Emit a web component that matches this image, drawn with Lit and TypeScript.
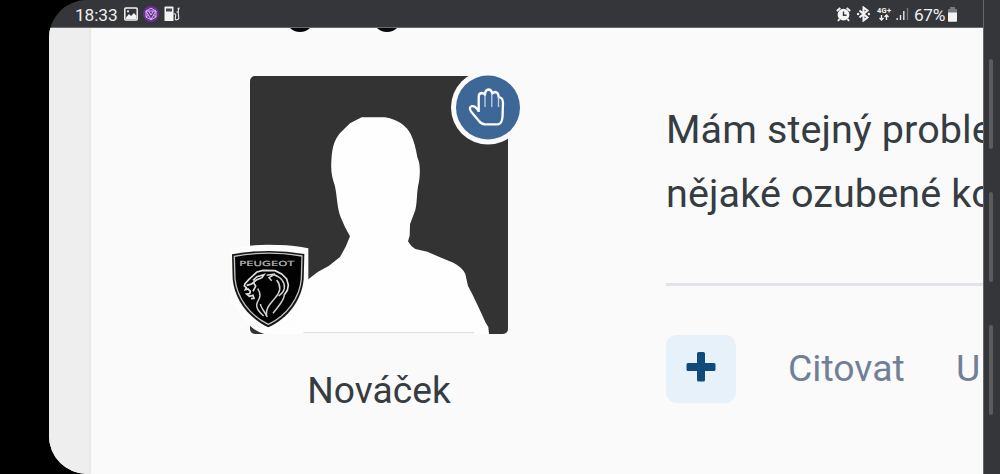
import { LitElement, html, css, svg } from "lit";
import { customElement } from "lit/decorators.js";

const lionStrokes = [
  "M84 122 L96 111 L114 106 L150 107 L170 117 L185 132 L190 150 L187 166 L178 179",
  "M84 122 L72 133 L60 146 L58 153 L64 158 L61 164 L69 162 L76 169 L74 176 L65 177 L73 184 L84 181 L87 190 L78 191",
  "M65 151 L80 147 L94 135 L111 128 L117 119 L96 125 L84 136",
  "M86 144 L92 153 L84 169",
];
const maneStrokes = [
  "M98 161 C111 179 103 190 98 200 C89 216 101 229 116 243",
  "M125 121 L150 117 L132 128 L140 137",
  "M147 119 C169 126 181 144 178 160 C176 172 169 177 161 183",
  "M155 135 C169 152 166 171 151 188 C137 207 123 213 124 242",
  "M178 178 C179 198 157 216 144 235",
  "M106 207 C108 220 119 229 127 246",
];

@customElement("status-bar")
class StatusBar extends LitElement {
  static styles = css`
    :host {
      display: flex;
      box-sizing: border-box;
      height: 28px;
      padding: 1px 25px 0 26px;
      align-items: center;
      justify-content: space-between;
      background: #35363a;
      border-bottom: 1px solid #68696c;
      color: #eeeef0;
      font: 17.3px/26px Roboto, sans-serif;
    }
    .group { display: flex; align-items: center; height: 27px; }
    .time { width: 49px; letter-spacing: -0.1px; padding-top: 1px; }
    .percent { width: 33px; letter-spacing: -0.35px; margin-left: 5px; padding-top: 1px; }
    svg { display: block; flex: none; }
    .spaced { margin-left: 5px; }
    .tight { margin-left: 3px; }
    .network { font: 700 7.5px Roboto, sans-serif; }
  `;
  render() {
    return html`
      <div class="group">
        <span class="time">18:33</span>
        <svg width="14" height="14" viewBox="0 0 14 14"><rect x=".8" y="1" width="12.4" height="12" rx="1" fill="none" stroke="#f3f3f4" stroke-width="1.5"/><path d="M2 10.5 5 7l2 2 3-3 2.5 3v3H2z" fill="#f3f3f4"/><circle cx="4" cy="4.3" r="1.1" fill="#f3f3f4"/></svg>
        <svg class="spaced" width="16" height="16" viewBox="0 0 16 16"><circle cx="8" cy="8" r="8" fill="#6b2e9a"/><path d="M8 2.2 13 5v6l-5 2.8L3 11V5zM3 5l10 0L8 13.5zM5.5 5 8 9l2.5-4M3 11l2.5-2M13 11l-2.5-2" fill="none" stroke="#d6b9e8" stroke-width="1"/></svg>
        <svg class="spaced" width="17" height="16" viewBox="0 0 17 16"><path d="M.5 1.5q0-1 1-1h7q1 0 1 1V15H.5z" fill="#f3f3f4"/><path d="M2 2.5h6v3H2z" fill="#45464a"/><path d="M9.500 8q3-1 2 3t2 2.500q2-.5 1-4t.5-8M13.500 3l2-1M12.500 6h2.500" fill="none" stroke="#e8e8e9" stroke-width="1.1"/></svg>
      </div>
      <div class="group">
        <svg width="15" height="15" viewBox="0 0 15 15"><path d="M.8 4 4.300 1M10.700 1l3.500 3M3.500 12 2 14M11.500 12l1.500 2" stroke="#f3f3f4" stroke-width="1.9"/><circle cx="7.500" cy="7.700" r="5.900" fill="#f3f3f4"/><path d="M7.500 4.500v3.700h3" fill="none" stroke="#35363a" stroke-width="1.400"/></svg>
        <svg class="spaced" width="15" height="16" viewBox="0 0 14 16"><path d="m3 4.500 8 7L7 14.500v-13l4 3-8 7" fill="none" stroke="#f3f3f4" stroke-width="2"/><circle cx="1.600" cy="8" r="1.200" fill="#eee"/><circle cx="12.400" cy="8" r="1.200" fill="#eee"/></svg>
        <svg class="spaced network" width="17" height="16" viewBox="0 0 17 16"><text x="1" y="6.500" textLength="14" fill="#f3f3f4">4G+</text><path d="M5.500 9v5M3.500 12l2 2 2-2M10.500 14V9M8.500 11l2-2 2 2" fill="none" stroke="#f3f3f4" stroke-width="1.300"/></svg>
        <svg class="tight" width="13" height="14" viewBox="0 0 12 14"><path d="M.7 13v-2M4 13V8M7.300 13V4" stroke="#e6e6e7" stroke-width="1.400"/><path d="M11 13V1" stroke="#77787b" stroke-width="1.400"/></svg>
        <span class="percent">67%</span>
        <svg width="11" height="15" viewBox="0 0 11 15"><path d="M3 0h5v2h2v4H1V2h2z" fill="#78797c"/><path d="M1 5.500h9V14q0 .7-.7.7H1.700Q1 14.700 1 14z" fill="#f3f3f4"/></svg>
      </div>`;
  }
}

@customElement("user-card")
class UserCard extends LitElement {
  static styles = css`
    :host { display: flex; flex-direction: column; align-items: center; width: 258px; }
    .avatar { position: relative; width: 258px; height: 258px; }
    svg { display: block; }
    .portrait { border-radius: 5px; }
    .brand { position: absolute; left: -25px; top: 159px; }
    .hand { position: absolute; left: 201px; top: -7px; }
    .brandname { font: 21px "DejaVu Sans", sans-serif; }
    .name { margin-top: 34px; font: 37.2px/44px Roboto, sans-serif; color: #353c42; white-space: nowrap; }
  `;
  render() {
    return html`
      <div class="avatar">
        <svg class="portrait" width="258" height="258" viewBox="30 18 774 774">
          <rect x="30" y="18" width="774" height="774" fill="#333333"/>
          <path fill="#fefefe" d="M365 142H435C475 149 500 168 513 194 522 212 528 238 532 262 541 280 541 310 537 335 529 365 533 390 526 420L510 463 509 497 504 514 514 528 526 537 562 545 600 562 640 578Q667 592 676 612L684 648 697 673 710 700 724 730 737 758 745 771 747 792H72L205 628 233 606 266 588 300 561 317 530 330 499 316 473 303 444C290 411 292 378 284 345 277 325 272 305 274 275 276 225 286 206 301 188L330 160Z"/>
          <path d="M190 788H702" stroke="#dedede" stroke-width="4"/>
        </svg>
        <svg class="brand" width="100" height="105" viewBox="0 0 300 315">
          <path d="M18 43Q75 26 160 30 210 31 250 40V165L205 270 150 297H118Q96 292 75 272L18 200Z" fill="#fdfdfd"/>
          <path d="M21 58Q130 38 238 57L236 132C231 194 190 249 130 277 70 249 29 194 23 132Z" fill="#171717"/>
          <path d="M28 64Q130 45 231 63L229 132C224 188 186 241 130 268 74 241 36 188 30 132Z" fill="#020202" stroke="#c4c4c4" stroke-width="4"/>
          <text class="brandname" x="43" y="93" textLength="165" lengthAdjust="spacingAndGlyphs" fill="#b9b9b9" stroke="#b9b9b9" stroke-width=".6">PEUGEOT</text>
          ${lionStrokes.map((d) => svg`<path d=${d} fill="none" stroke="#e0e0e0" stroke-width="5"/>`)}
          ${maneStrokes.map((d) => svg`<path d=${d} fill="none" stroke="#d2d2d2" stroke-width="4.500"/>`)}
        </svg>
        <svg class="hand" width="72" height="77" viewBox="0 0 72 77">
          <circle cx="37" cy="38.500" r="37" fill="#fafafa"/>
          <circle cx="37" cy="38.500" r="32" fill="#3d6797"/>
          <path d="M27.700 43V28Q27.700 24.300 30.500 24 33.300 24 34 26 34 21 37.200 20.500 40.500 20.500 41.300 24.500 42.500 23 44.500 23 47.500 23.500 47.700 28.500 51.800 28 52 34L51.500 48Q51 54.500 47 55.300H34Q30.500 55.300 28 52L20 42.500Q17.500 38.500 20.500 37.200 24 36.400 27.700 42" fill="none" stroke="#fff" stroke-width="2.300" stroke-linejoin="round"/>
          <path d="M34 26V38M40.800 25V38M47.500 28V38" stroke="#c5d3e2" stroke-width="1.300"/>
        </svg>
      </div>
      <div class="name">Nováček</div>`;
  }
}

@customElement("post-body")
class PostBody extends LitElement {
  static styles = css`
    :host { display: block; width: 317px; overflow: hidden; font-family: Roboto, sans-serif; }
    .text { height: 185px; font-size: 39.5px; line-height: 64px; letter-spacing: 0.12px; color: #353c42; white-space: nowrap; border-bottom: 3px solid #e3e4ea; }
    .actions { display: flex; align-items: center; padding-top: 49px; font-size: 37.4px; line-height: 66px; color: #718096; white-space: nowrap; }
    .add { display: grid; place-items: center; flex: none; width: 70px; height: 68px; margin-right: 52px; border-radius: 11px; background: #e6f1fa; }
    .quote { width: 168px; flex: none; }
    .label { padding-bottom: 2px; }
    svg { display: block; margin-top: -5px; }
  `;
  render() {
    return html`
      <div class="text">Mám stejný proble<br>nějaké ozubené ko</div>
      <div class="actions">
        <span class="add"><svg width="30" height="30" viewBox="0 0 30 30"><path d="M12.500 0h5Q19 0 19 1.500V11h9q1.500 0 1.500 1.500v5q0 1.500-1.500 1.500h-9v9q0 1.500-1.500 1.500h-5Q11 29.500 11 28v-9H2Q.5 19 .5 17.500v-5Q.5 11 2 11h9V1.500Q11 0 12.500 0Z" fill="#104b7b"/></svg></span>
        <span class="quote label">Citovat</span><span class="label">U</span>
      </div>`;
  }
}

@customElement("app-root")
class AppRoot extends LitElement {
  static styles = css`
    :host { display: block; height: 474px; overflow: hidden; background: #000; }
    .device { display: flex; height: 474px; margin-left: 49px; overflow: hidden; border-radius: 38px 0 0 38px; background: #35363a; }
    .screen { display: flex; flex-direction: column; width: 934px; }
    .page { display: flex; flex: 1; background: #fafafa; }
    .gutter { width: 42px; background: linear-gradient(90deg, #eeeeee 0 38px, #e9e9e9 42px); }
    .content { display: grid; grid-template-columns: 258px 317px; column-gap: 158px; flex: 1; padding-left: 159px; grid-template-rows: 48px 1fr; }
    .title { grid-column: 1 / 3; }
    .title svg { display: block; margin-left: 39px; }
    .post { margin-top: 22px; }
    .edge { display: flex; flex-direction: column; gap: 43px; width: 17px; box-sizing: border-box; padding: 59px 0 0 5px; background: #35363a; border-left: 1px solid #66676b; height: 474px; }
    .handle { width: 4px; height: 90px; border-radius: 2px; background: #5b5c60; }
  `;
  render() {
    return html`
      <div class="device">
        <div class="screen">
          <status-bar></status-bar>
          <div class="page">
            <div class="gutter"></div>
            <div class="content">
              <div class="title"><svg width="110" height="4" viewBox="0 0 110 4"><path d="M1 0h20Q17 4 11 4T1 0M88 0h20q-4 4-10 4T88 0" fill="#08080a"/></svg></div>
              <user-card></user-card>
              <post-body class="post"></post-body>
            </div>
          </div>
        </div>
        <div class="edge"><div class="handle"></div><div class="handle"></div><div class="handle"></div></div>
      </div>`;
  }
}
